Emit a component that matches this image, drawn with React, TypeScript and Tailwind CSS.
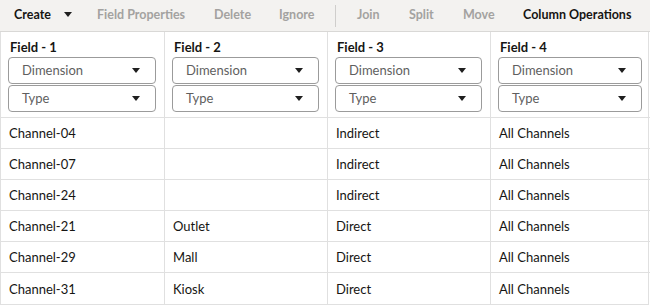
const rows: string[][] = [
  ["Channel-04", "", "Indirect", "All Channels"],
  ["Channel-07", "", "Indirect", "All Channels"],
  ["Channel-24", "", "Indirect", "All Channels"],
  ["Channel-21", "Outlet", "Direct", "All Channels"],
  ["Channel-29", "Mall", "Direct", "All Channels"],
  ["Channel-31", "Kiosk", "Direct", "All Channels"],
];

function Caret({ className = "" }: { className?: string }) {
  return (
    <svg width="8" height="5" viewBox="0 0 8 5" className={className}>
      <path d="M0 0h8L4 5z" fill="#1f1f1f" />
    </svg>
  );
}

function Select({ label }: { label: string }) {
  return (
    <div className="flex h-[27px] items-center justify-between rounded-[4px] border border-[#9b9b9b] bg-white pl-[13px] pr-[15px] text-[13px] text-[#5f5f5f]">
      <span className="pt-[1px]">{label}</span>
      <Caret />
    </div>
  );
}

export default function App() {
  const cols = ["Field - 1", "Field - 2", "Field - 3", "Field - 4"];
  return (
    <div
      className="h-[305px] w-[650px] overflow-hidden bg-white text-[#161513]"
      style={{ fontFamily: "Lato, 'Open Sans', sans-serif" }}
    >
      {/* Toolbar */}
      <div className="flex h-[32px] items-center whitespace-nowrap border-b border-[#d9d8d6] bg-[#f3f2f0] pl-[14px] text-[12.5px] font-bold">
        <div className="flex w-[83px] items-center text-[#161513]">
          Create
          <Caret className="ml-[13px] mb-[2px]" />
        </div>
        <span className="w-[117px] text-[#a3a2a0]">Field Properties</span>
        <span className="w-[65px] text-[#a3a2a0]">Delete</span>
        <span className="w-[56px] text-[#a3a2a0]">Ignore</span>
        <div className="h-[22px] w-px bg-[#cfcecc]" />
        <span className="ml-[21px] w-[52px] text-[#a3a2a0]">Join</span>
        <span className="w-[54px] text-[#a3a2a0]">Split</span>
        <span className="w-[60px] text-[#a3a2a0]">Move</span>
        <span className="text-[#161513]">Column Operations</span>
      </div>

      {/* Grid */}
      <div className="grid w-[649px] grid-cols-[164px_163px_163px_159px] border-x border-b border-[#e0e0e0] text-[13px]">
        {cols.map((c, i) => (
          <div
            key={c}
            className={`flex h-[86px] flex-col border-b border-[#e0e0e0] px-[7px] pt-[6px] ${i < 3 ? "border-r" : ""}`}
          >
            <div className="mb-[1px] h-[18px] pl-[2px] font-bold leading-[18px]">{c}</div>
            <div className="flex flex-col gap-[1px] pr-[1px]">
              <Select label="Dimension" />
              <Select label="Type" />
            </div>
          </div>
        ))}
        {rows.map((r, ri) =>
          r.map((cell, ci) => (
            <div
              key={`${ri}-${ci}`}
              className={`flex h-[31px] items-center border-[#e0e0e0] px-[8px] pt-[2px] ${ci < 3 ? "border-r" : ""} ${ri < rows.length - 1 ? "border-b" : ""}`}
            >
              {cell}
            </div>
          ))
        )}
      </div>
    </div>
  );
}
